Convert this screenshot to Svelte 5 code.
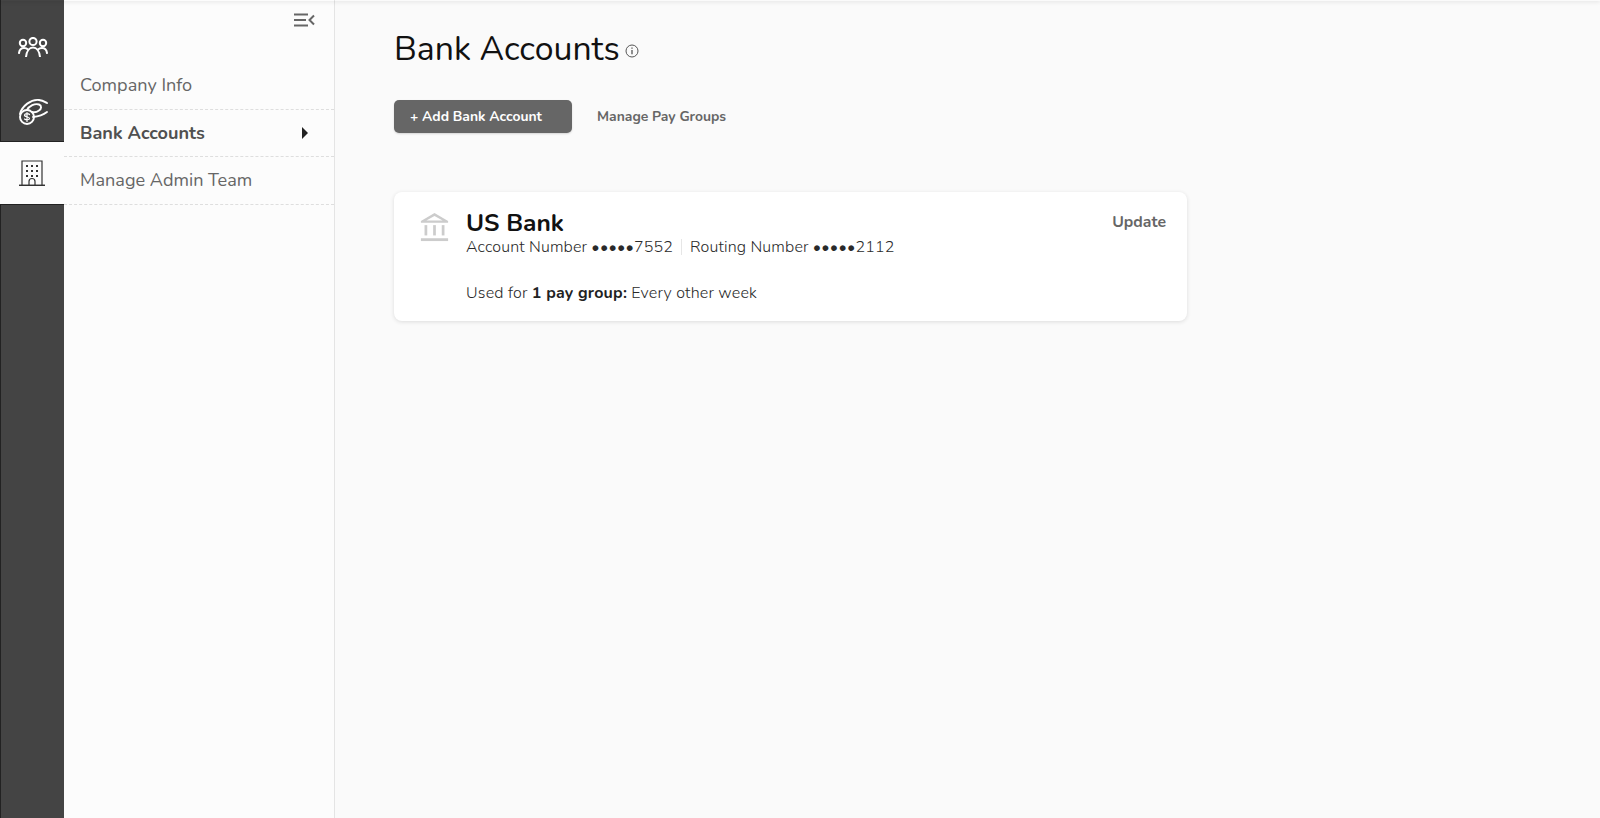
<script lang="ts">
  const menu = [
    { label: 'Company Info', active: false },
    { label: 'Bank Accounts', active: true },
    { label: 'Manage Admin Team', active: false }
  ];
</script>

<div class="shell">
  <nav class="rail">
    <div class="rail-top">
      <a class="rail-item" href="#people" aria-label="People">
        <svg width="30" height="20" viewBox="0 0 30 20" fill="none" stroke="#fff" stroke-width="2" stroke-linecap="round">
          <circle cx="5" cy="6" r="3.200" />
          <circle cx="15" cy="4.500" r="3.600" />
          <circle cx="25" cy="6" r="3.200" />
          <path d="M1 16c.5-3.500 3-5 5-5 1.500 0 3 .5 4 1.500" />
          <path d="M29 16c-.5-3.500-3-5-5-5-1.500 0-3 .5-4 1.500" />
          <path d="M8 20c.5-6 3.500-9.500 7-9.500s6.500 3.500 7 9.500" />
        </svg>
      </a>
      <a class="rail-item" href="#pay" aria-label="Payroll">
        <svg width="30" height="29" viewBox="0 0 30 29" fill="none" stroke="#fff" stroke-width="1.900" stroke-linecap="round" stroke-linejoin="round">
          <path d="M2 17C4 9 13 2 21 3c4 .5 6 2 8 3" />
          <path d="M9 13c2-4 8-7 12-5.500 3 1.200 2.500 4.500 0 6-2 1.500-5 2-7 1.500" />
          <path d="M15 20c5-.5 10-2 14-5" />
          <circle cx="9" cy="20" r="7" />
          <path d="M11.500 17.500c-1-1.200-4.500-1.200-5 .5-.4 2 5 1.500 5 3.500 0 1.600-3.600 1.600-5 .5M9 15.500v9" stroke-width="1.200" />
        </svg>
      </a>
    </div>
    <a class="rail-item current" href="#company" aria-label="Company">
      <svg width="26" height="26" viewBox="0 0 26 26" fill="none" stroke="#333" stroke-width="1.200">
        <path d="M3 25V1h20v24" />
        <path d="M0 25.300h26" stroke-width="1.500" />
        <path d="M10 25v-3.500a3 3 0 0 1 6 0V25" />
        <g fill="#333" stroke="none">
          <rect x="7" y="5" width="2" height="2" /><rect x="12" y="5" width="2" height="2" /><rect x="17" y="5" width="2" height="2" />
          <rect x="7" y="10" width="2" height="2" /><rect x="12" y="10" width="2" height="2" /><rect x="17" y="10" width="2" height="2" />
          <rect x="7" y="15" width="2" height="2" /><rect x="12" y="15" width="2" height="2" /><rect x="17" y="15" width="2" height="2" />
        </g>
      </svg>
    </a>
  </nav>

  <aside class="sidebar">
    <div class="collapse">
      <svg width="21" height="14" viewBox="0 0 21 14" fill="none" stroke="#666" stroke-width="2">
        <path d="M0 1.500h14M0 7h12M0 12.500h14" />
        <path d="M20 2.500L15.500 7l4.500 4.500" />
      </svg>
    </div>
    <ul class="menu">
      {#each menu as item}
        <li class:active={item.active}>
          <span>{item.label}</span>
          {#if item.active}<i class="caret"></i>{/if}
        </li>
      {/each}
    </ul>
  </aside>

  <main class="content">
    <header class="title">
      <h1>Bank Accounts</h1>
      <svg width="14" height="14" viewBox="0 0 14 14" fill="none" stroke="#555">
        <circle cx="7" cy="7" r="6" />
        <path d="M7 6v4.200M7 3.500v1.200" stroke-width="1.300" />
      </svg>
    </header>

    <div class="actions">
      <button class="primary">+ Add Bank Account</button>
      <button class="link">Manage Pay Groups</button>
    </div>

    <section class="card">
      <svg class="bank" width="29" height="30" viewBox="0 0 32 32" preserveAspectRatio="none" fill="#ccc">
        <path d="M16 1L31 9.500v2H1v-2zM16 4.200L7 9h18z" fill-rule="evenodd" />
        <rect x="5" y="14" width="3" height="11" />
        <rect x="14.500" y="14" width="3" height="11" />
        <rect x="24" y="14" width="3" height="11" />
        <rect x="1" y="28" width="30" height="3" />
      </svg>
      <div class="details">
        <h2>US Bank</h2>
        <p class="numbers">
          <span>Account Number •••••7552</span>
          <span class="sep"></span>
          <span>Routing Number •••••2112</span>
        </p>
        <p class="usage">Used for <b>1 pay group:</b> Every other week</p>
      </div>
      <button class="update">Update</button>
    </section>
  </main>
</div>

<style>
  :global(body) {
    margin: 0;
    background: #fafafa;
    font-family: "Nunito", "Lato", "Noto Sans", sans-serif;
  }

  .shell {
    display: flex;
    height: 818px;
    overflow: hidden;
    position: relative;
  }
  .shell::before {
    content: '';
    position: absolute;
    inset: 0 0 auto 0;
    height: 1px;
    box-shadow: 0 0 4px rgba(0, 0, 0, 0.3);
  }

  .rail {
    width: 64px;
    flex-shrink: 0;
    display: flex;
    flex-direction: column;
    background: #444;
    border-left: 1px solid #222;
    box-sizing: border-box;
  }
  .rail-top {
    height: 142px;
    padding-top: 37px;
    box-sizing: border-box;
    display: flex;
    flex-direction: column;
    gap: 40px;
    border-bottom: 1px solid #222;
  }
  .rail-item {
    display: flex;
    justify-content: center;
    align-items: center;
  }
  .rail-item.current {
    height: 63px;
    margin-left: -1px;
    width: 64px;
    background: #fcfcfc;
    border-bottom: 1px solid #222;
    box-sizing: border-box;
  }

  .sidebar {
    width: 271px;
    flex-shrink: 0;
    box-sizing: border-box;
    background: #fcfcfc;
    border-right: 1px solid #e4e4e4;
  }
  .collapse {
    height: 62px;
    box-sizing: border-box;
    padding: 13px 19px 0 0;
    display: flex;
    justify-content: flex-end;
    align-items: flex-start;
  }
  .menu { list-style: none; margin: 0; padding: 0; }
  .menu li {
    height: 47.500px;
    box-sizing: border-box;
    display: flex;
    align-items: center;
    justify-content: space-between;
    padding: 0 26px 0 16px;
    border-bottom: 1px dashed #dedede;
    font-size: 18.100px;
    color: #666;
  }
  .menu li.active { font-weight: 700; color: #505050; }
  .caret {
    width: 0;
    height: 0;
    border-left: 6px solid #222;
    border-top: 6px solid transparent;
    border-bottom: 6px solid transparent;
  }

  .content {
    flex: 1;
    padding: 26px 0 0 59px;
  }
  .title { display: flex; align-items: center; gap: 5px; height: 46px; }
  .title svg { margin-top: 4px; }
  h1 {
    margin: 0;
    font-size: 33.800px;
    font-weight: 400;
    color: #111;
  }

  .actions {
    display: flex;
    align-items: center;
    gap: 25px;
    margin-top: 28px;
  }
  button {
    font-family: inherit;
    border: 0;
    background: none;
    padding: 0;
    font-size: 13.900px;
    font-weight: 700;
    color: #666;
  }
  .primary {
    width: 178px;
    height: 33px;
    box-sizing: border-box;
    padding-left: 16px;
    text-align: left;
    background: #666;
    color: #fff;
    border-radius: 5px;
    box-shadow: 0 1px 2px rgba(0, 0, 0, 0.15);
  }

  .card {
    width: 793px;
    height: 129px;
    margin-top: 59px;
    box-sizing: border-box;
    padding: 20px 21px 0 26px;
    display: flex;
    align-items: flex-start;
    background: #fff;
    border-radius: 8px;
    box-shadow: 0 1px 4px rgba(0, 0, 0, 0.12);
  }
  .bank { margin-right: 17px; }
  .details {
    flex: 1;
    color: #2a2a2a;
    font-size: 16px;
    font-weight: 300;
    letter-spacing: 0.15px;
  }
  h2 {
    margin: -1px 0 0;
    font-size: 24.500px;
    line-height: 24px;
    font-weight: 700;
    letter-spacing: 0;
    color: #111;
  }
  p { margin: 0; }
  .numbers {
    display: flex;
    align-items: center;
    height: 20px;
    margin-top: 2px;
  }
  .sep {
    width: 1px;
    height: 16px;
    margin: 0 8px;
    background: #e6e6e6;
  }
  .usage { margin-top: 26px; line-height: 20px; letter-spacing: 0.2px; }
  .usage b { font-weight: 700; color: #222; }
  .update { font-size: 15.800px; line-height: 20px; }
</style>
